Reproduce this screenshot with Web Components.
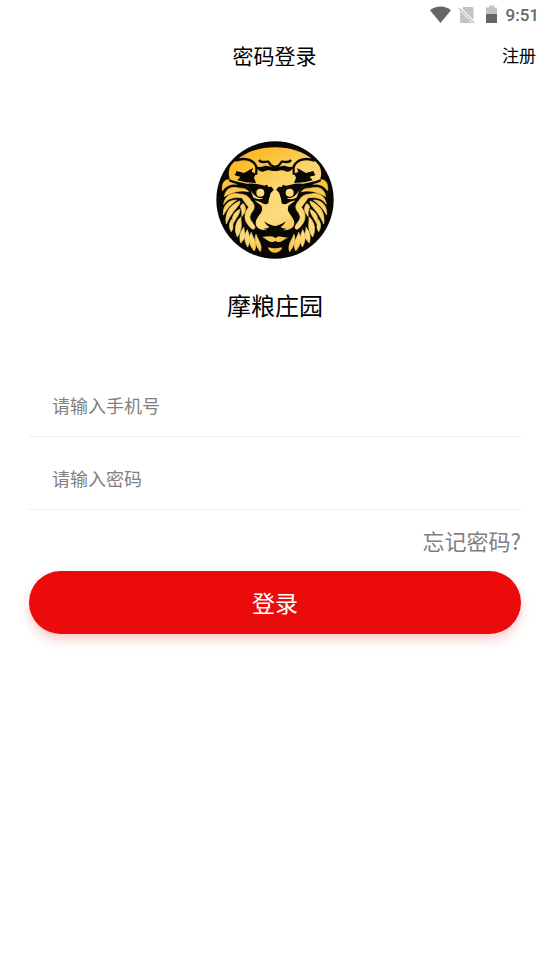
<!DOCTYPE html>
<html lang="zh-CN">
<head>
<meta charset="utf-8">
<meta name="viewport" content="width=device-width, initial-scale=1">
<title>密码登录</title>
<style>
html, body { margin: 0; background: #fff; }
body { font-family: "Noto Sans CJK SC", sans-serif; color: #000; }
</style>
</head>
<body>
<login-page></login-page>

<script>
const define = (name, html, setup) => {
  const template = document.createElement('template');
  template.innerHTML = html;
  customElements.define(name, class extends HTMLElement {
    constructor() {
      super();
      this.attachShadow({ mode: 'open' }).append(template.content.cloneNode(true));
    }
    connectedCallback() { if (setup) setup(this, this.shadowRoot); }
  });
};

define('status-bar', `
<style>
:host { display: flex; justify-content: flex-end; align-items: center; height: 30px; padding-right: 10px; font: 500 17px/30px Roboto, sans-serif; color: #666; }
svg { display: block; }
span { margin-left: 8px; }
</style>
<svg width="69" height="20" viewBox="0 0 69 20" aria-hidden="true">
  <path d="M1 5.300C7 .3 16 .3 22 5.300L11.500 18Z" fill="#666"/>
  <path d="M34 2H43q1.500 0 1.500 1.500V15L33.500 4ZM31 6 43 18H32q-1 0-1-1Z" fill="#c3c3c3"/>
  <path d="M30 3 45 18" stroke="#c3c3c3" stroke-width="1.500"/>
  <path d="M60 .5h5v2h3V9H57V2.500h3Z" fill="#c3c3c3"/>
  <path d="M57 9h11v9H57Z" fill="#666"/>
</svg>
<span>9:51</span>`);

define('nav-bar', `
<style>
:host { display: grid; grid-template-columns: 1fr auto 1fr; align-items: center; height: 50px; padding: 0 13px; }
h1 { grid-column: 2; margin: 0; font-size: 21px; line-height: 30px; font-weight: 400; }
::slotted(a) { justify-self: end; font-size: 17px; line-height: 24px; color: #000; text-decoration: none; }
</style>
<h1><slot></slot></h1><slot name="action"></slot>`);

define('lion-logo', `
<style>
:host { display: block; width: 118px; height: 118px; }
svg { display: block; width: 100%; height: 100%; }
</style>
<svg viewBox="18 19 354 354" role="img" aria-label="摩粮庄园">
  <defs>
    <linearGradient id="gold" gradientUnits="userSpaceOnUse" x1="90" y1="50" x2="270" y2="350">
      <stop offset="0" stop-color="#fdb515"/><stop offset=".4" stop-color="#fbd36b"/><stop offset=".65" stop-color="#fddb7e"/><stop offset="1" stop-color="#f7ae1b"/>
    </linearGradient>
    <g id="mane" stroke="url(#gold)" stroke-width="2" stroke-linejoin="round">
      <path d="M37 168C35 145 44 132 60 136C71 136 76 143 80 149C61 147 49 153 37 168Z"/>
      <path d="M43 186C47 162 62 156 81 159C93 162 108 159 116 171C94 166 67 171 43 186Z"/>
      <path d="M41 209C44 185 62 174 82 177C99 179 112 179 121 195C102 188 78 186 61 192C51 196 47 201 41 209Z"/>
      <path d="M40 241C38 214 53 196 80 196C64 207 51 222 40 241Z"/>
      <path d="M49 268C43 236 60 210 90 199C91 210 77 221 69 233C61 244 54 255 49 268Z"/>
      <path d="M68 270C63 245 73 231 90 224C89 240 77 251 68 270Z"/>
      <path d="M64 291C55 277 58 264 65 254C66 268 74 276 64 291Z"/>
      <path d="M82 307C71 284 77 260 93 247C91 262 101 280 82 307Z"/>
      <path d="M92 325C86 302 92 291 102 278C101 294 114 304 92 325Z"/>
      <path d="M113 337C99 312 105 298 112 285C117 300 125 314 113 337Z"/>
      <path d="M133 349C115 330 116 309 124 293C127 309 145 323 133 349Z"/>
      <path d="M151 351C136 333 133 313 138 299C143 315 159 331 151 351Z"/>
      <path d="M93 184C112 187 128 198 132 212C135 225 125 231 121 241C114 256 135 268 135 279C131 289 121 281 111 266C100 247 105 232 116 217C110 210 101 199 93 184Z"/>
      <path d="M91 217C96 206 100 204 104 213C111 227 101 238 95 246C97 233 95 225 91 217Z"/>
    </g>
    <g id="features">
      <path d="M104 149C130 142 147 151 163 153L171 150L175 157L184 156L192 166L186 175L177 193L175 206C166 212 157 206 151 202L134 197L128 189C145 194 151 193 160 192C145 191 137 185 130 178C122 170 118 158 104 149Z"/>
      <path d="M80 109L102 115L129 100L125 111L137 117L132 129L138 145L106 143L82 137L91 126L74 122Z"/>
      <path d="M76 78C104 67 130 75 138 94C142 105 137 112 139 120M58 137C72 145 91 145 112 151" fill="none" stroke="#080703" stroke-width="7"/>
      <path d="M134 89C145 102 154 96 162 95C171 90 179 98 195 98L195 109C180 109 172 104 165 109C155 115 143 109 134 89Z"/>
      <path d="M147 76C155 88 167 79 175 81L183 92L195 97" fill="none" stroke="#080703" stroke-width="7"/>
      <path d="M163 260C174 269 186 273 195 274L195 290C182 287 171 287 160 283C169 281 174 281 178 277C171 273 166 268 163 260Z"/>
    </g>
  </defs>
  <circle cx="195" cy="196" r="176" fill="#080703"/>
  <g fill="url(#gold)">
    <use href="#mane"/>
    <use href="#mane" transform="matrix(-1 0 0 1 390 0)"/>
    <path d="M60 135C51 113 59 88 80 77C108 50 151 38 195 38C239 38 282 50 310 77C331 88 339 113 330 135C317 145 296 146 283 151C267 162 266 174 260 188L253 200C246 207 233 211 234 220C230 234 251 245 253 264C254 282 231 292 205 284L195 287L185 284C159 292 136 282 137 264C139 245 160 234 156 220C157 211 144 207 137 200L130 188C124 174 123 162 107 151C94 146 73 145 60 135Z"/>
  </g>
  <g fill="#080703">
    <use href="#features"/>
    <use href="#features" transform="matrix(-1 0 0 1 390 0)"/>
  </g>
  <g fill="#fddb7c">
    <circle cx="151" cy="174" r="12"/><circle cx="239" cy="174" r="12"/>
    <path d="M182 175L195 162L208 175L214 198H176Z"/>
    <path d="M131 184C142 191 151 190 160 190C151 196 139 194 131 184ZM259 184C248 191 239 190 230 190C239 196 251 194 259 184Z"/>
  </g>
  <g fill="url(#gold)">
    <path d="M157 307C170 306 182 303 192 307L196 311L201 307C211 303 220 308 234 309C222 314 215 323 202 322L196 319L189 322C176 323 169 313 157 307Z"/>
    <path d="M174 339C181 336 188 342 195 341C202 342 209 336 217 339C209 358 181 360 174 339Z"/>
  </g>
</svg>`);

define('brand-header', `
<style>
:host { display: flex; flex-direction: column; align-items: center; gap: 28px; padding: 61px 0 51px 1px; }
h2 { margin: 0; font-size: 24px; line-height: 36px; font-weight: 400; }
</style>
<lion-logo></lion-logo><h2><slot></slot></h2>`);

define('text-field', `
<style>
:host { display: block; border-bottom: 1px solid #eee; }
input { display: block; box-sizing: border-box; width: 100%; height: 62px; padding: 0 23px; border: 0; outline: 0; background: none; font: inherit; font-size: 18px; color: #000; }
input::placeholder { color: #808080; opacity: 1; }
</style>
<input>`, (host, root) => {
  const input = root.querySelector('input');
  input.type = host.getAttribute('type');
  input.placeholder = host.getAttribute('label');
  input.setAttribute('aria-label', host.getAttribute('label'));
});

define('primary-button', `
<style>
:host { display: block; }
button { display: block; width: 100%; height: 63px; padding: 0 0 2px; border: 0; border-radius: 32px; background: #ec0b0b; color: #fff; font: inherit; font-size: 23px; box-shadow: 0 6px 12px rgba(236, 11, 11, .2); cursor: pointer; }
</style>
<button type="button"><slot></slot></button>`);

define('login-form', `
<style>
:host { display: block; padding: 0 28px 0 29px; }
form { display: flex; flex-direction: column; gap: 10px; }
a { align-self: flex-end; font-size: 22px; line-height: 41px; color: #808080; text-decoration: none; }
</style>
<form>
  <text-field type="tel" label="请输入手机号"></text-field>
  <text-field type="password" label="请输入密码"></text-field>
  <a href="#forgot">忘记密码?</a>
  <primary-button>登录</primary-button>
</form>`);

define('login-page', `
<style>:host { display: block; min-height: 100vh; background: #fff; }</style>
<status-bar></status-bar>
<nav-bar>密码登录<a slot="action" href="#register">注册</a></nav-bar>
<main><brand-header>摩粮庄园</brand-header><login-form></login-form></main>`);
</script>
</body>
</html>
